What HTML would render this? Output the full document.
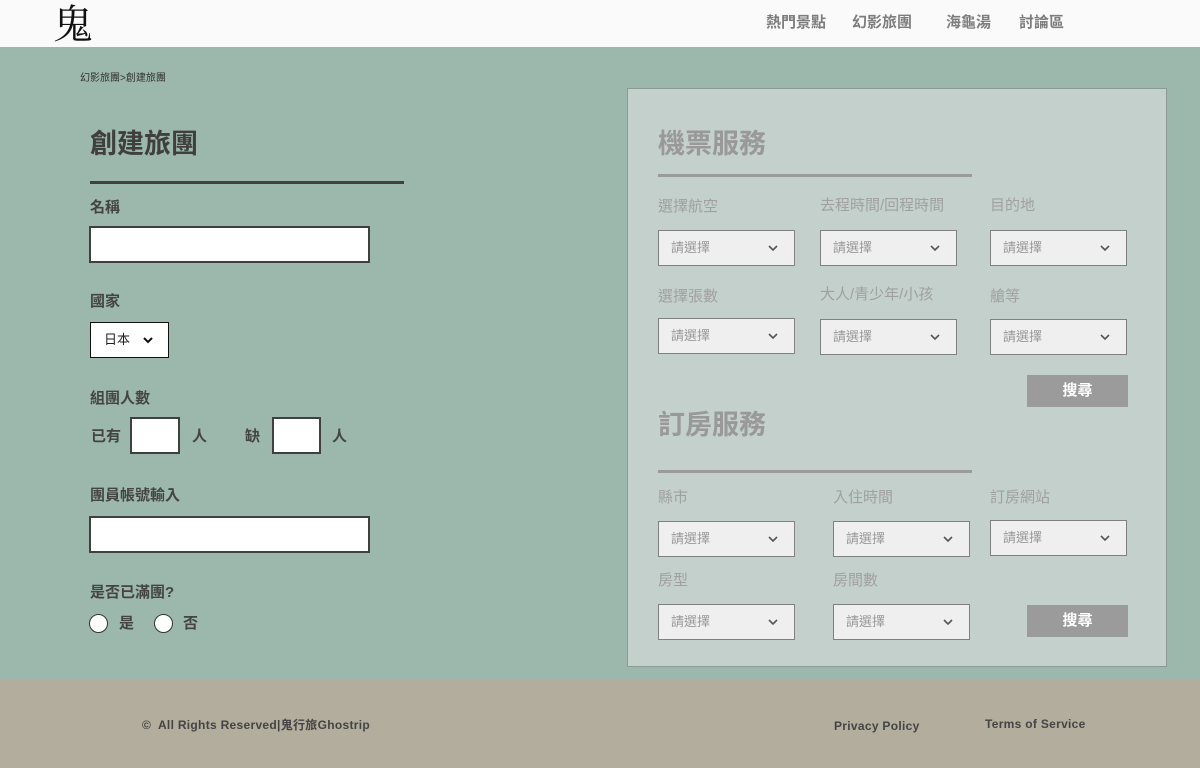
<!DOCTYPE html>
<html><head><meta charset="utf-8"><style>
*{margin:0;padding:0;box-sizing:border-box}
body{width:1200px;height:768px;position:relative;overflow:hidden;font-family:"Liberation Sans","Noto Sans CJK TC",sans-serif;background:#9cb8ad;color:#3f3f3f;line-height:1.25}
.a{position:absolute;white-space:nowrap}
#hd{left:0;top:0;width:1200px;height:47px;background:#fafafa}
.nav{top:14px;font-size:15px;font-weight:bold;color:#7d7d7d}
#ft{left:0;top:680px;width:1200px;height:88px;background:#b2ad9c}
.ftx{font-size:12px;font-weight:bold;color:#444;letter-spacing:.3px}
.lb{font-size:15px;font-weight:bold;color:#444}
.in{background:#fff;border:2px solid #404040}
#pn{left:627px;top:88px;width:540px;height:579px;background:#c4d0cb;border:1px solid #8a9a94}
.pt{font-size:27px;font-weight:bold;color:#999}
.pl{font-size:15px;color:#a0a0a0}
.sel{background:#efefef;border:1px solid #808080;width:137px;height:36px;font-size:13px;color:#999;padding:9px 0 0 12px}
.sel svg{position:absolute;right:16px;top:14px}
.btn{background:#9b9b9b;color:#fff;font-size:15px;font-weight:bold;width:101px;text-align:center}
.rad{width:19px;height:19px;border:1px solid #333;border-radius:50%;background:#fff}
</style></head><body>
<div class="a" id="hd"></div>
<div class="a" style="left:53px;top:-2px;font-size:40px;font-family:'Noto Serif CJK SC',serif;color:#111;line-height:48px">鬼</div>
<div class="a nav" style="left:766px">熱門景點</div>
<div class="a nav" style="left:852px">幻影旅團</div>
<div class="a nav" style="left:946px">海龜湯</div>
<div class="a nav" style="left:1019px">討論區</div>

<div class="a" style="left:80px;top:73px;font-size:10px;color:#333">幻影旅團&gt;創建旅團</div>
<div class="a" style="left:90px;top:128px;font-size:27px;font-weight:bold;color:#3f3f3f">創建旅團</div>
<div class="a" style="left:90px;top:181px;width:314px;height:3px;background:#404040"></div>
<div class="a lb" style="left:90px;top:199px">名稱</div>
<div class="a in" style="left:89px;top:226px;width:281px;height:37px"></div>
<div class="a lb" style="left:90px;top:293px">國家</div>
<div class="a" style="left:90px;top:322px;width:79px;height:36px;background:#fff;border:1px solid #111;font-size:13px;color:#222;padding:9px 0 0 13px">日本<svg style="position:absolute;left:52px;top:14px" width="10" height="7" viewBox="0 0 10 7"><path d="M1 1l4 4 4-4" stroke="#111" stroke-width="2" fill="none"/></svg></div>
<div class="a lb" style="left:90px;top:390px">組團人數</div>
<div class="a lb" style="left:91px;top:428px">已有</div>
<div class="a in" style="left:130px;top:417px;width:50px;height:37px"></div>
<div class="a lb" style="left:192px;top:428px">人</div>
<div class="a lb" style="left:245px;top:428px">缺</div>
<div class="a in" style="left:272px;top:417px;width:49px;height:37px"></div>
<div class="a lb" style="left:332px;top:428px">人</div>
<div class="a lb" style="left:90px;top:487px">團員帳號輸入</div>
<div class="a in" style="left:89px;top:516px;width:281px;height:37px"></div>
<div class="a lb" style="left:90px;top:584px">是否已滿團?</div>
<div class="a rad" style="left:89px;top:614px"></div>
<div class="a lb" style="left:119px;top:615px">是</div>
<div class="a rad" style="left:154px;top:614px"></div>
<div class="a lb" style="left:183px;top:615px">否</div>

<div class="a" id="pn"></div>
<div class="a pt" style="left:658px;top:128px">機票服務</div>
<div class="a" style="left:658px;top:174px;width:314px;height:3px;background:#9b9b9b"></div>
<div class="a pl" style="left:658px;top:198px">選擇航空</div>
<div class="a pl" style="left:820px;top:197px">去程時間/回程時間</div>
<div class="a pl" style="left:990px;top:197px">目的地</div>
<div class="a sel" style="left:658px;top:230px">請選擇<svg width="10" height="7" viewBox="0 0 10 7"><path d="M1 1l4 4 4-4" stroke="#555" stroke-width="1.6" fill="none"/></svg></div>
<div class="a sel" style="left:820px;top:230px">請選擇<svg width="10" height="7" viewBox="0 0 10 7"><path d="M1 1l4 4 4-4" stroke="#555" stroke-width="1.6" fill="none"/></svg></div>
<div class="a sel" style="left:990px;top:230px">請選擇<svg width="10" height="7" viewBox="0 0 10 7"><path d="M1 1l4 4 4-4" stroke="#555" stroke-width="1.6" fill="none"/></svg></div>
<div class="a pl" style="left:658px;top:288px">選擇張數</div>
<div class="a pl" style="left:820px;top:286px">大人/青少年/小孩</div>
<div class="a pl" style="left:990px;top:288px">艙等</div>
<div class="a sel" style="left:658px;top:318px">請選擇<svg width="10" height="7" viewBox="0 0 10 7"><path d="M1 1l4 4 4-4" stroke="#555" stroke-width="1.6" fill="none"/></svg></div>
<div class="a sel" style="left:820px;top:319px">請選擇<svg width="10" height="7" viewBox="0 0 10 7"><path d="M1 1l4 4 4-4" stroke="#555" stroke-width="1.6" fill="none"/></svg></div>
<div class="a sel" style="left:990px;top:319px">請選擇<svg width="10" height="7" viewBox="0 0 10 7"><path d="M1 1l4 4 4-4" stroke="#555" stroke-width="1.6" fill="none"/></svg></div>
<div class="a btn" style="left:1027px;top:375px;height:32px;line-height:32px">搜尋</div>

<div class="a pt" style="left:658px;top:409px">訂房服務</div>
<div class="a" style="left:658px;top:470px;width:314px;height:3px;background:#9b9b9b"></div>
<div class="a pl" style="left:658px;top:489px">縣市</div>
<div class="a pl" style="left:833px;top:489px">入住時間</div>
<div class="a pl" style="left:990px;top:489px">訂房網站</div>
<div class="a sel" style="left:658px;top:521px">請選擇<svg width="10" height="7" viewBox="0 0 10 7"><path d="M1 1l4 4 4-4" stroke="#555" stroke-width="1.6" fill="none"/></svg></div>
<div class="a sel" style="left:833px;top:521px">請選擇<svg width="10" height="7" viewBox="0 0 10 7"><path d="M1 1l4 4 4-4" stroke="#555" stroke-width="1.6" fill="none"/></svg></div>
<div class="a sel" style="left:990px;top:520px">請選擇<svg width="10" height="7" viewBox="0 0 10 7"><path d="M1 1l4 4 4-4" stroke="#555" stroke-width="1.6" fill="none"/></svg></div>
<div class="a pl" style="left:658px;top:572px">房型</div>
<div class="a pl" style="left:833px;top:572px">房間數</div>
<div class="a sel" style="left:658px;top:604px">請選擇<svg width="10" height="7" viewBox="0 0 10 7"><path d="M1 1l4 4 4-4" stroke="#555" stroke-width="1.6" fill="none"/></svg></div>
<div class="a sel" style="left:833px;top:604px">請選擇<svg width="10" height="7" viewBox="0 0 10 7"><path d="M1 1l4 4 4-4" stroke="#555" stroke-width="1.6" fill="none"/></svg></div>
<div class="a btn" style="left:1027px;top:605px;height:32px;line-height:32px">搜尋</div>

<div class="a" id="ft"></div>
<div class="a ftx" style="left:142px;top:718px">©&nbsp; All Rights Reserved|鬼行旅Ghostrip</div>
<div class="a ftx" style="left:834px;top:719px">Privacy Policy</div>
<div class="a ftx" style="left:985px;top:717px">Terms of Service</div>
</body></html>
